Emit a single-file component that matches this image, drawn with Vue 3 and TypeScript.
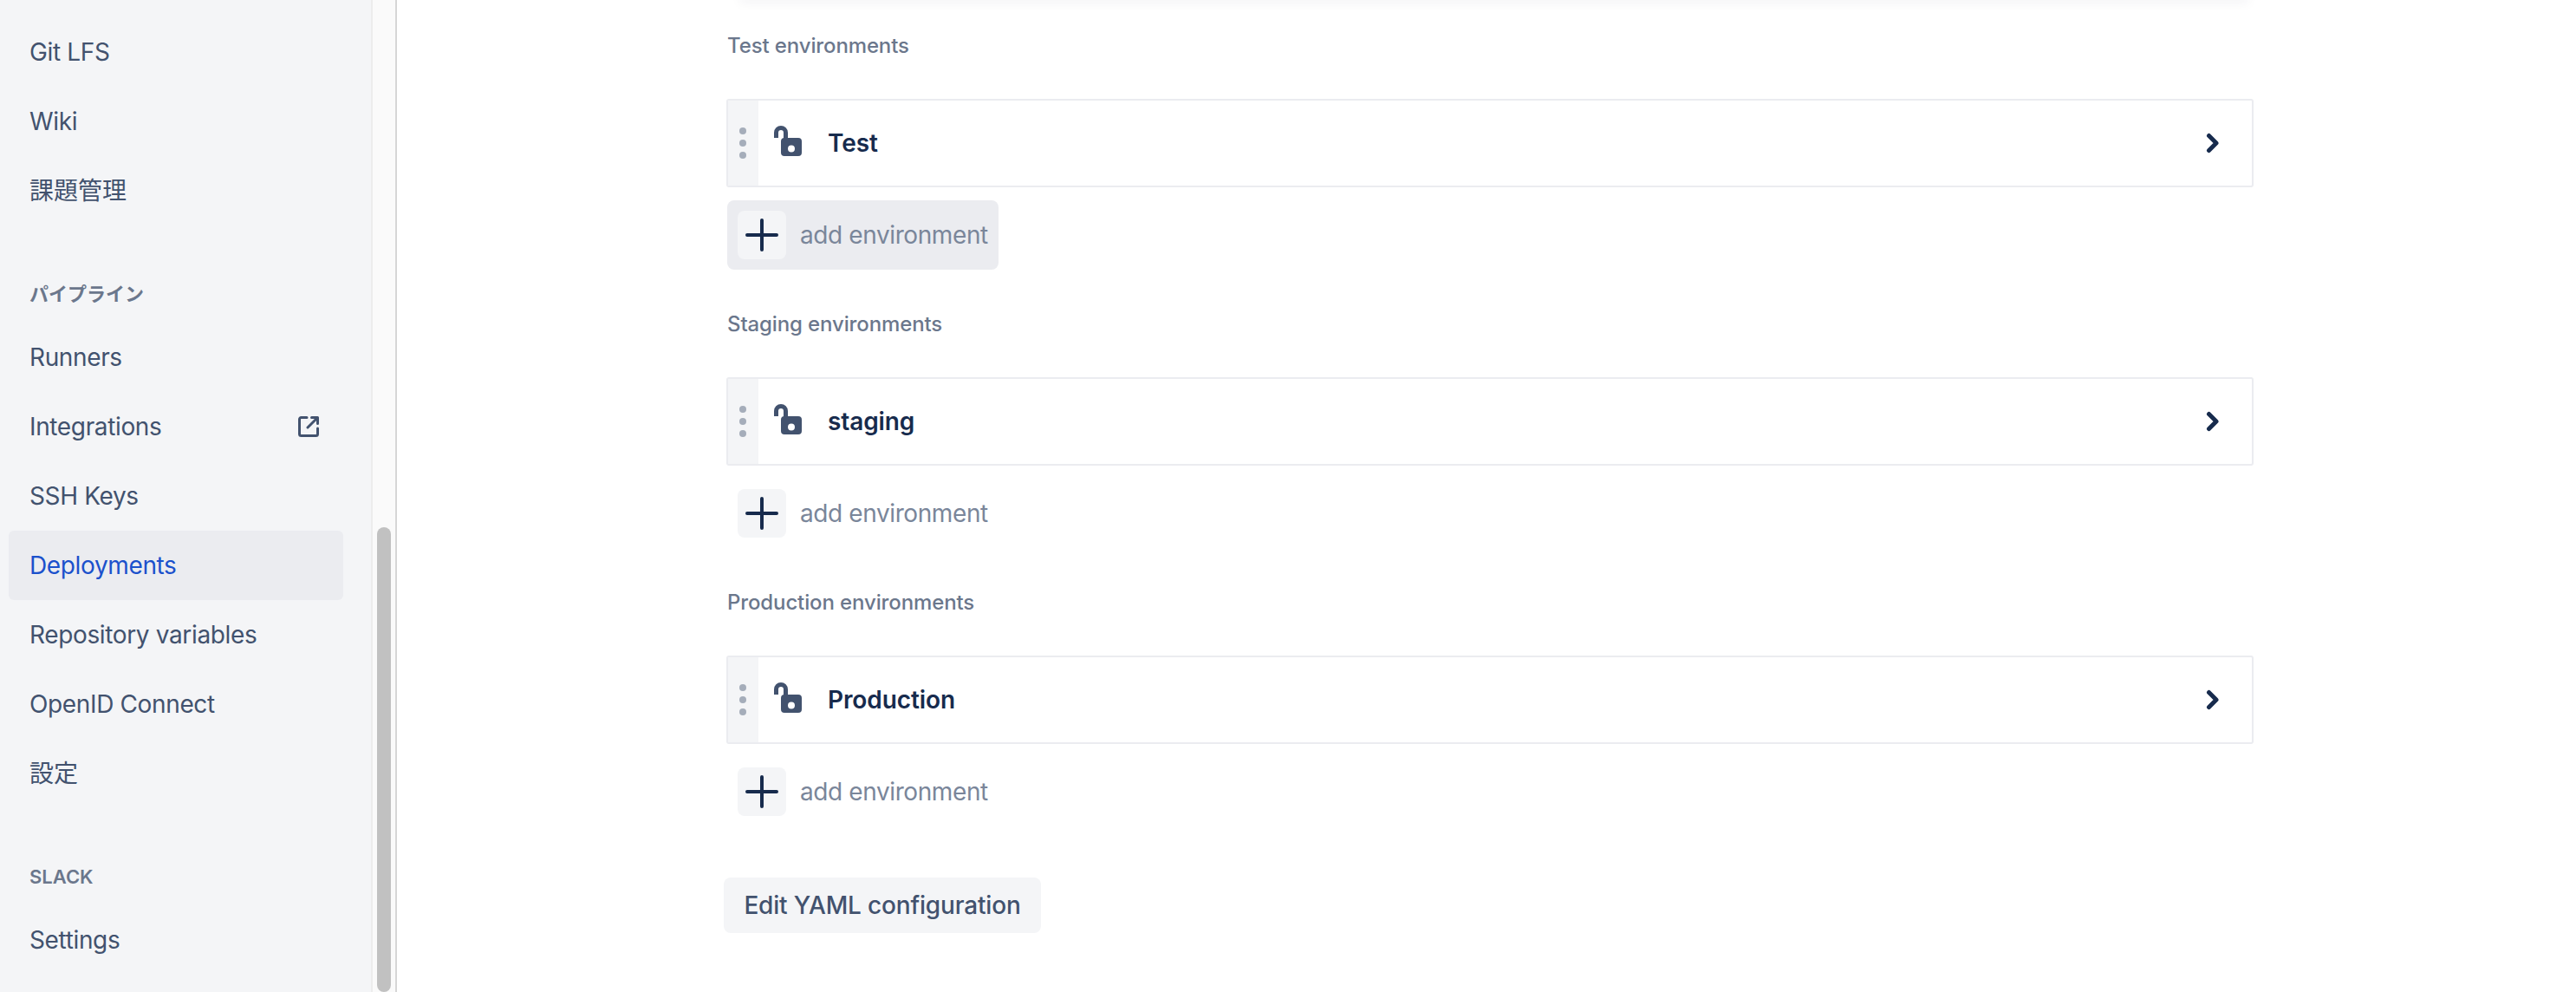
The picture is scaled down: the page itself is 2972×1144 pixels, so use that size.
<script setup lang="ts">
interface NavItem { label: string; active?: boolean; external?: boolean; heading?: boolean; cjk?: boolean }
const nav: NavItem[] = [
  { label: 'Git LFS' },
  { label: 'Wiki' },
  { label: '課題管理', cjk: true },
  { label: 'パイプライン', heading: true },
  { label: 'Runners' },
  { label: 'Integrations', external: true },
  { label: 'SSH Keys' },
  { label: 'Deployments', active: true },
  { label: 'Repository variables' },
  { label: 'OpenID Connect' },
  { label: '設定', cjk: true },
  { label: 'SLACK', heading: true },
  { label: 'Settings' },
]
const groups = [
  { title: 'Test environments', name: 'Test', hover: true },
  { title: 'Staging environments', name: 'staging', hover: false },
  { title: 'Production environments', name: 'Production', hover: false },
]
</script>

<template>
  <div class="page">
    <aside class="sidebar">
      <template v-for="item in nav" :key="item.label">
        <div v-if="item.heading" class="heading">{{ item.label }}</div>
        <a v-else class="nav-item" :class="{ active: item.active, cjk: item.cjk }">
          <span>{{ item.label }}</span>
          <svg v-if="item.external" class="ext" width="24" height="24" viewBox="0 0 24 24" fill="none">
            <path d="M10 1.500H3.500a2 2 0 0 0-2 2v17a2 2 0 0 0 2 2h17a2 2 0 0 0 2-2V14" stroke="#42526e" stroke-width="3" stroke-linecap="round" />
            <path d="M11 13 22 2M15.500 1.500h7v7" stroke="#42526e" stroke-width="3" stroke-linecap="round" stroke-linejoin="round" />
          </svg>
        </a>
      </template>
    </aside>
    <div class="scrollbar"><div class="thumb"></div></div>
    <main class="main">
      <div class="top-shadow"></div>
      <div class="column">
        <section v-for="g in groups" :key="g.name" class="group">
          <h3 class="group-title">{{ g.title }}</h3>
          <div class="card">
            <div class="handle">
              <i class="dot"></i><i class="dot"></i><i class="dot"></i>
            </div>
            <svg class="lock" width="32" height="36" viewBox="0 0 32 36" fill="none">
              <path d="M2.500 14V8a5.500 5.500 0 0 1 11 0v7" stroke="#42526e" stroke-width="5" />
              <path fill-rule="evenodd" clip-rule="evenodd" d="M12 14h16a4 4 0 0 1 4 4v13a4 4 0 0 1-4 4H12a4 4 0 0 1-4-4V18a4 4 0 0 1 4-4Zm8 16.500a4 4 0 1 0 0-8 4 4 0 0 0 0 8Z" fill="#42526e" />
            </svg>
            <span class="env-name">{{ g.name }}</span>
            <svg class="chevron" width="16" height="24" viewBox="0 0 16 24" fill="none">
              <path d="M3.500 3.500 12 12l-8.500 8.500" stroke="#172b4d" stroke-width="5" stroke-linecap="round" stroke-linejoin="round" />
            </svg>
          </div>
          <div class="add-row" :class="{ hover: g.hover }">
            <span class="plus-box">
              <svg width="38" height="38" viewBox="0 0 38 38" fill="none">
                <path d="M19 2v34M2 19h34" stroke="#172b4d" stroke-width="4" stroke-linecap="round" />
              </svg>
            </span>
            <span class="add-label">add environment</span>
          </div>
        </section>
        <button class="yaml-btn" type="button">Edit YAML configuration</button>
      </div>
    </main>
  </div>
</template>

<style>
html, body { margin: 0; background: #fff; overflow: hidden; }
</style>

<style scoped>
.page {
  display: flex;
  width: 2972px;
  height: 1144px;
  overflow: hidden;
  background: #fff;
  font-family: Inter, "Noto Sans CJK JP", sans-serif;
}
.sidebar {
  width: 428px;
  flex: none;
  box-sizing: border-box;
  padding: 20px 32px 0 10px;
  background: #f4f5f7;
  display: flex;
  flex-direction: column;
}
.nav-item {
  height: 80px;
  flex: none;
  box-sizing: border-box;
  padding: 0 28px 0 24px;
  display: flex;
  align-items: center;
  justify-content: space-between;
  font-size: 28px;
  letter-spacing: -0.36px;
  color: #42526e;
  border-radius: 6px;
}
.nav-item.cjk {
  letter-spacing: 0;
}
.nav-item.cjk span {
  margin-bottom: 4px;
}
.nav-item.active {
  background: #ebecf0;
  color: #1b51cc;
}
.heading {
  flex: none;
  padding: 63px 0 17px 24px;
  font-size: 22px;
  line-height: 32px;
  font-weight: 600;
  color: #6b778c;
}
.scrollbar {
  width: 26px;
  flex: none;
  box-sizing: content-box;
  border-left: 2px solid #ececec;
  border-right: 2px solid #d6d6d6;
  background: #fafafa;
  padding-top: 608px;
  display: flex;
  justify-content: center;
}
.thumb {
  width: 16px;
  height: 536px;
  border-radius: 8px;
  background: #c1c1c1;
}
.main {
  flex: 1;
  min-width: 0;
  padding-left: 377px;
  position: relative;
}
.top-shadow {
  position: absolute;
  top: -4px;
  left: 395px;
  width: 1742px;
  height: 4px;
  box-shadow: 0 2px 12px rgba(9, 30, 66, 0.1);
}
.column {
  width: 1765px;
  padding-top: 37px;
  display: flex;
  flex-direction: column;
}
.group {
  height: 321px;
  display: flex;
  flex-direction: column;
}
.group-title {
  margin: 0 0 45px 4px;
  font-size: 24px;
  line-height: 32px;
  font-weight: 500;
  letter-spacing: -0.12px;
  color: #6b778c;
}
.card {
  margin-left: 3px;
  width: 1762px;
  height: 102px;
  box-sizing: border-box;
  border: 2px solid #ebecf0;
  border-radius: 3px;
  display: flex;
  align-items: center;
  flex: none;
}
.handle {
  width: 35px;
  box-sizing: border-box;
  padding-right: 1px;
  align-self: stretch;
  background: #f4f5f7;
  display: flex;
  flex-direction: column;
  align-items: center;
  justify-content: center;
  gap: 6px;
  flex: none;
}
.dot {
  width: 8px;
  height: 8px;
  border-radius: 50%;
  background: #a5adba;
}
.lock {
  margin-left: 18px;
  margin-top: -4px;
  flex: none;
}
.env-name {
  margin-left: 30px;
  flex: 1;
  font-size: 28px;
  font-weight: 600;
  letter-spacing: -0.1px;
  color: #172b4d;
}
.chevron {
  margin-right: 37px;
  flex: none;
}
.add-row {
  margin: 15px 0 0 4px;
  width: 313px;
  height: 80px;
  box-sizing: border-box;
  padding-left: 12px;
  border-radius: 8px;
  display: flex;
  align-items: center;
  gap: 16px;
}
.add-row.hover {
  background: #ebecf0;
}
.plus-box {
  width: 56px;
  height: 56px;
  border-radius: 8px;
  background: #f4f5f7;
  display: flex;
  align-items: center;
  justify-content: center;
  flex: none;
}
.add-label {
  font-size: 28px;
  letter-spacing: -0.4px;
  color: #7a869a;
  white-space: nowrap;
}
.yaml-btn {
  margin-top: 12px;
  align-self: flex-start;
  width: 366px;
  height: 64px;
  padding: 0;
  border: 0;
  border-radius: 8px;
  background: #f4f5f7;
  font-family: inherit;
  font-size: 28px;
  font-weight: 500;
  letter-spacing: -0.17px;
  color: #42526e;
}
</style>
